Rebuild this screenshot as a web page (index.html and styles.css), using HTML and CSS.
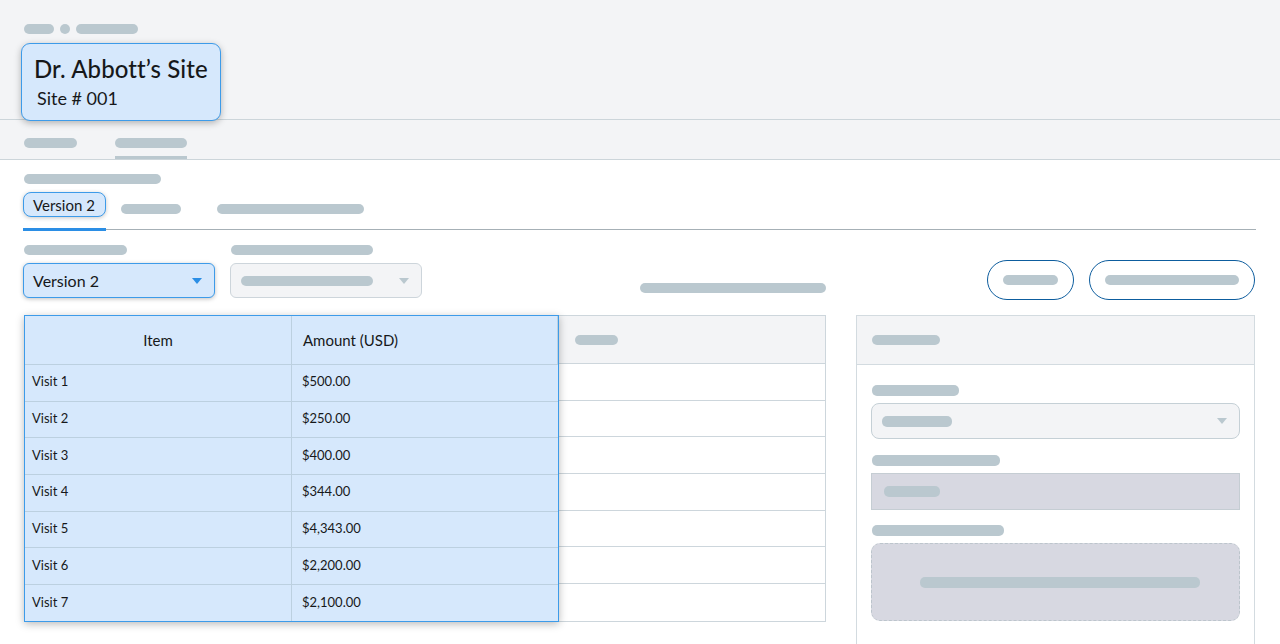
FILE: index.html
```html
<!DOCTYPE html>
<html>
<head>
<meta charset="utf-8">
<link rel="stylesheet" href="styles.css">
</head>
<body>
<header class="top">
  <div class="crumbs">
    <span class="pill w30"></span>
    <span class="dot"></span>
    <span class="pill w62"></span>
  </div>
  <div class="site-card">
    <div class="site-title">Dr. Abbott’s Site</div>
    <div class="site-sub">Site # 001</div>
  </div>
</header>
<nav class="nav">
  <span class="pill w53"></span>
  <div class="nav-active"><span class="pill w72"></span></div>
</nav>
<main class="content">
  <span class="pill w137 page-label"></span>
  <div class="tabs">
    <div class="tab active"><span class="chip">Version 2</span></div>
    <div class="tab"><span class="pill w60"></span></div>
    <div class="tab"><span class="pill w147"></span></div>
  </div>
  <div class="form-row">
    <div class="field">
      <span class="pill w103"></span>
      <div class="select selected">
        <span>Version 2</span>
        <span class="caret blue"></span>
      </div>
    </div>
    <div class="field">
      <span class="pill w142"></span>
      <div class="select disabled">
        <span class="pill w132"></span>
        <span class="caret gray"></span>
      </div>
    </div>
    <span class="pill w186 mid-pill"></span>
    <div class="buttons">
      <div class="btn b1"><span class="pill w55"></span></div>
      <div class="btn b2"><span class="pill w134"></span></div>
    </div>
  </div>
  <div class="lower">
    <div class="table">
      <div class="hl">
        <div class="hrow">
          <div class="hcell center">Item</div>
          <div class="hcell">Amount (USD)</div>
        </div>
        <div class="row"><div class="c1">Visit 1</div><div class="c2">$500.00</div></div>
        <div class="row"><div class="c1">Visit 2</div><div class="c2">$250.00</div></div>
        <div class="row"><div class="c1">Visit 3</div><div class="c2">$400.00</div></div>
        <div class="row"><div class="c1">Visit 4</div><div class="c2">$344.00</div></div>
        <div class="row"><div class="c1">Visit 5</div><div class="c2">$4,343.00</div></div>
        <div class="row"><div class="c1">Visit 6</div><div class="c2">$2,200.00</div></div>
        <div class="row last"><div class="c1">Visit 7</div><div class="c2">$2,100.00</div></div>
      </div>
      <div class="rest">
        <div class="rhead"><span class="pill w43"></span></div>
        <div class="rrow"></div>
        <div class="rrow"></div>
        <div class="rrow"></div>
        <div class="rrow"></div>
        <div class="rrow"></div>
        <div class="rrow"></div>
        <div class="rrow last"></div>
      </div>
    </div>
    <aside class="panel">
      <div class="phead"><span class="pill w68"></span></div>
      <div class="pbody">
        <span class="pill w87 plabel"></span>
        <div class="pselect"><span class="pill w70"></span><span class="caret gray"></span></div>
        <span class="pill w128 plabel"></span>
        <div class="pinput"><span class="pill w56"></span></div>
        <span class="pill w132 plabel"></span>
        <div class="drop"><span class="pill w280"></span></div>
      </div>
    </aside>
  </div>
</main>
</body>
</html>
```
FILE: styles.css
```css
* { box-sizing: border-box; }
html, body { margin: 0; padding: 0; }
body {
  font-family: Lato, "Open Sans", "Liberation Sans", sans-serif;
  color: #16181a;
  background: #ffffff;
  width: 1280px;
  height: 644px;
  overflow: hidden;
}
.pill {
  display: block;
  height: 10px;
  border-radius: 5px;
  background: #bac8cf;
  flex: none;
}
.w30 { width: 30px; } .w43 { width: 43px; } .w53 { width: 53px; } .w55 { width: 55px; }
.w56 { width: 56px; } .w60 { width: 60px; } .w62 { width: 62px; } .w68 { width: 68px; }
.w70 { width: 70px; } .w72 { width: 72px; } .w87 { width: 87px; } .w103 { width: 103px; }
.w128 { width: 128px; } .w132 { width: 132px; } .w134 { width: 134px; } .w137 { width: 137px; }
.w142 { width: 142px; } .w147 { width: 147px; } .w186 { width: 186px; } .w280 { width: 280px; }

/* header */
.top {
  background: #f3f4f6;
  height: 120px;
  border-bottom: 1px solid #ccd5da;
  padding: 24px 0 0 21px;
}
.crumbs { display: flex; align-items: center; gap: 6px; padding-left: 3px; }
.dot { width: 10px; height: 10px; border-radius: 50%; background: #bac8cf; }
.site-card {
  position: relative;
  z-index: 2;
  margin-top: 9px;
  width: 200px;
  height: 78px;
  background: #d6e8fc;
  border: 1px solid #3d9be9;
  border-radius: 9px;
  box-shadow: 0 2px 7px rgba(0,0,0,0.28);
  padding: 10px 0 0 12px;
}
.site-title { font-size: 24px; line-height: 30px; font-weight: 500; letter-spacing: 0.1px; }
.site-sub { font-size: 18px; line-height: 24px; margin-top: 2px; padding-left: 3px; }

.nav {
  background: #f3f4f6;
  height: 40px;
  border-bottom: 1px solid #ccd5da;
  display: flex;
  align-items: flex-start;
  gap: 38px;
  padding: 18px 0 0 24px;
}
.nav-active { border-bottom: 3px solid #bac8cf; padding-bottom: 8px; }

/* content */
.content { padding: 14px 24px 0 23px; }
.page-label { margin-left: 1px; }
.tabs {
  margin-top: 8px;
  display: flex;
  align-items: flex-start;
  border-bottom: 1px solid #a6b0b6;
  height: 38px;
}
.tab { height: 39px; flex: none; }
.tab.active { border-bottom: 3px solid #2b8ee5; margin-right: 15px; }
.tab:nth-child(2) { padding-top: 12px; margin-right: 36px; }
.tab:nth-child(3) { padding-top: 12px; }
.chip {
  display: inline-flex;
  align-items: center;
  white-space: nowrap;
  height: 25px;
  padding: 0 10px 0 9px;
  background: #d6e8fc;
  border: 1px solid #3d9be9;
  border-radius: 8px;
  font-size: 15px;
  box-shadow: 0 1px 4px rgba(0,0,0,0.22);
}

.form-row {
  display: flex;
  align-items: flex-start;
  padding-top: 15px;
  height: 85px;
}
.field { display: flex; flex-direction: column; gap: 8px; width: 192px; }
.field .pill { margin-left: 1px; }
.field + .field { margin-left: 15px; }
.select {
  height: 35px;
  border-radius: 6px;
  display: flex;
  align-items: center;
  justify-content: space-between;
  padding: 0 12px 0 9px;
}
.select.selected {
  background: #d6e8fc;
  border: 1px solid #3d9be9;
  font-size: 16px;
  box-shadow: 0 1px 4px rgba(0,0,0,0.25);
}
.select.disabled {
  background: #f3f4f6;
  border: 1px solid #cdd5db;
}
.caret {
  width: 0; height: 0;
  border-left: 5px solid transparent;
  border-right: 5px solid transparent;
  border-top: 6px solid #2b8ee5;
}
.caret.gray { border-top-color: #bac8cf; }
.mid-pill { margin: 38px 0 0 218px; }
.buttons { margin-left: auto; margin-top: 15px; display: flex; gap: 15px; margin-right: 1px; }
.btn {
  height: 40px;
  border: 1px solid #0d5d9e;
  border-radius: 20px;
  display: flex;
  align-items: center;
  justify-content: center;
}
.b1 { width: 87px; }
.b2 { width: 166px; }

.lower { display: flex; align-items: flex-start; gap: 30px; padding-left: 1px; }
.table { display: flex; width: 802px; }
.hl {
  position: relative;
  z-index: 2;
  width: 535px;
  background: #d6e8fc;
  border: 1px solid #3d9be9;
  box-shadow: 0 2px 8px rgba(0,0,0,0.28);
}
.hrow, .row { display: grid; grid-template-columns: 267px 1fr; }
.hrow { height: 49px; border-bottom: 1px solid #bcd0e0; }
.row { height: 36.7px; border-bottom: 1px solid #bcd0e0; }
.row.last { border-bottom: none; height: 36px; }
.hcell { font-size: 15px; display: flex; align-items: center; padding-left: 11px; }
.hcell.center { justify-content: center; padding-left: 0; }
.hcell, .c1 { border-right: 1px solid #bcd0e0; }
.c1, .c2 { font-size: 13px; display: flex; align-items: center; padding-bottom: 3px; }
.c1 { padding-left: 7px; }
.c2 { padding-left: 10px; }

.rest {
  flex: 1;
  border: 1px solid #cdd6dc;
  border-left: none;
  margin-top: 0;
}
.rhead {
  height: 48px;
  background: #f3f4f6;
  border-bottom: 1px solid #cdd6dc;
  display: flex;
  align-items: center;
  padding-left: 16px;
}
.rrow { height: 36.7px; border-bottom: 1px solid #cdd6dc; }
.rrow.last { border-bottom: none; height: 35px; }

.panel {
  width: 399px;
  height: 340px;
  border: 1px solid #d3dbe0;
  border-bottom: none;
}
.phead {
  height: 49px;
  background: #f3f4f6;
  border-bottom: 1px solid #d3dbe0;
  display: flex;
  align-items: center;
  padding-left: 15px;
}
.pbody { padding: 20px 14px 0 14px; display: flex; flex-direction: column; }
.plabel { height: 11px; margin-left: 1px; }
.pselect {
  margin-top: 7px;
  height: 36px;
  border: 1px solid #c5d0d6;
  border-radius: 8px;
  background: #f3f4f6;
  display: flex;
  align-items: center;
  justify-content: space-between;
  padding: 0 12px 0 10px;
}
.pselect .pill { height: 11px; }
.pselect + .plabel { margin-top: 16px; }
.pinput {
  margin-top: 7px;
  height: 37px;
  background: #d7d8e1;
  border: 1px solid #c5cdd3;
  display: flex;
  align-items: center;
  padding-left: 12px;
}
.pinput .pill { height: 11px; }
.pinput + .plabel { margin-top: 15px; }
.drop {
  margin-top: 7px;
  height: 78px;
  background: #d7d8e1;
  border: 1px dashed #bcc5cc;
  border-radius: 9px;
  display: flex;
  align-items: center;
  justify-content: center;
}
.drop .pill { height: 11px; margin-left: 8px; }
```
